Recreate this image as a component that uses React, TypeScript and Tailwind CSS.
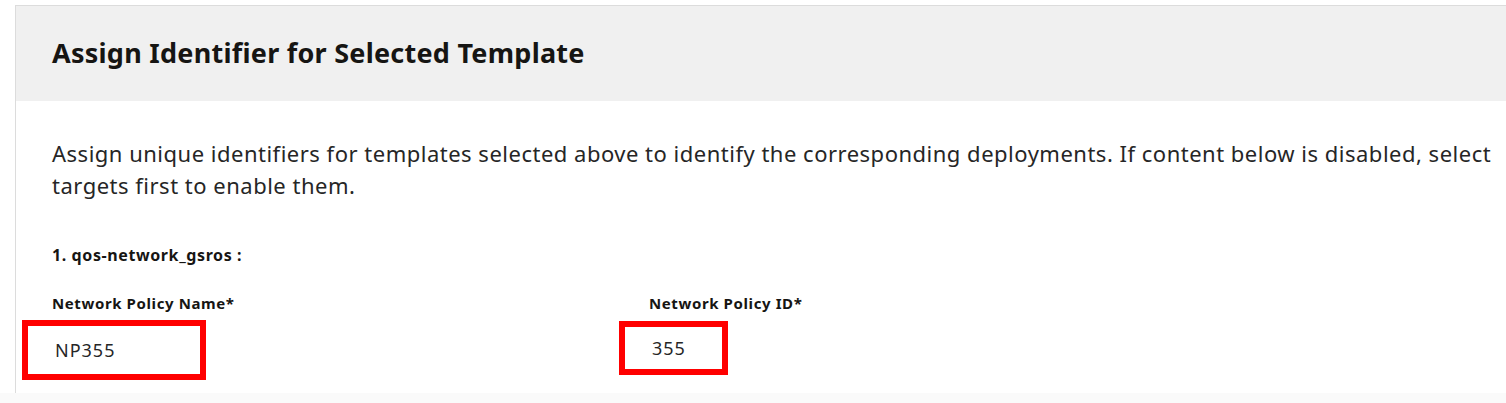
import React from "react";

type Field = {
  label: string;
  value: string;
  boxClass: string;
};

const fields: Field[] = [
  { label: "Network Policy Name*", value: "NP355", boxClass: "w-[184px] h-[60px] mt-[7px]" },
  { label: "Network Policy ID*", value: "355", boxClass: "w-[109px] h-[54px] mt-[8px]" },
];

const font = { fontFamily: "'Noto Sans', 'Open Sans', sans-serif" };

export default function App() {
  return (
    <div className="w-[1506px] h-[403px] bg-[#fafafa] overflow-hidden text-[#161513]" style={font}>
      <div className="bg-white pt-[5px] pl-[15px] h-[393px]">
        <div className="h-full border-l border-t border-[#dcdcdc]">
          {/* header */}
          <div className="h-[95px] bg-[#f0f0f0] pl-[36px] flex items-center">
            <h1 className="text-[27px] font-bold tracking-[0.25px]">
              Assign Identifier for Selected Template
            </h1>
          </div>

          <div className="pl-[36px] pr-[8px]">
            <p className="mt-[36px] text-[22px] leading-[32px] tracking-[0.5px] text-[#262626]">
              Assign unique identifiers for templates selected above to identify the corresponding
              deployments. If content below is disabled, select targets first to enable them.
            </p>

            <div className="mt-[42px] text-[16px] font-bold tracking-[0.6px]">1. qos-network_gsros :</div>

            <div className="mt-[26px] flex">
              {fields.map((f, i) => (
                <div key={i} className="w-[597px] flex flex-col">
                  <label className="text-[15px] font-bold leading-[20px] tracking-[0.6px]">{f.label}</label>
                  <div
                    className={`${f.boxClass} -ml-[30px] border-[6px] border-[#ff0000] flex items-center pl-[27px]`}
                  >
                    <span className="text-[18px] tracking-[1px] text-[#262626]">{f.value}</span>
                  </div>
                </div>
              ))}
            </div>
          </div>
        </div>
      </div>
    </div>
  );
}
